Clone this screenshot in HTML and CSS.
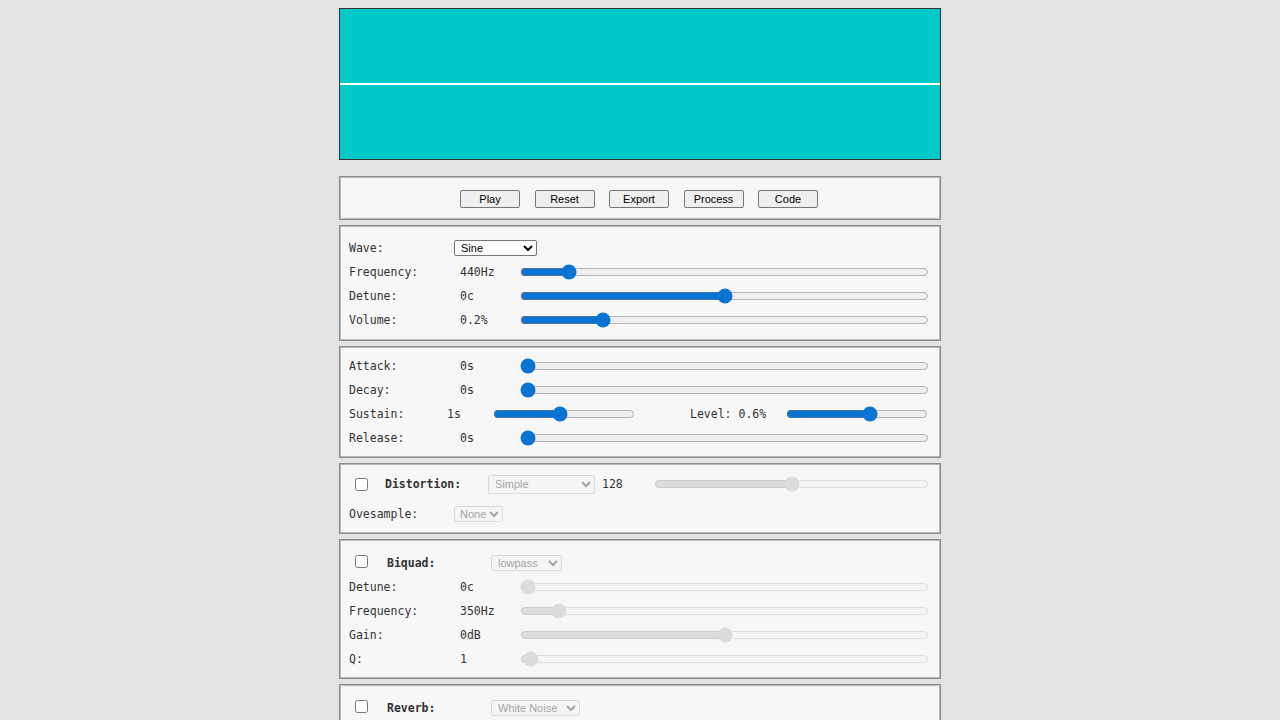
FILE: index.html
```html
<!DOCTYPE html>
<html lang="en">
	<head>
		<meta charset="UTF-8">
		<meta name="viewport" content="width=device-width, initial-scale=1.0">
		<title>Synth</title>
		<link rel="stylesheet" href="styles.css">
	</head>
	<body>
		<div class="synth">
			<div class="scope">
				<div class="scope-line"></div>
			</div>

			<div class="panel buttons">
				<button>Play</button>
				<button>Reset</button>
				<button>Export</button>
				<button>Process</button>
				<button>Code</button>
			</div>

			<div class="panel osc">
				<div class="row">
					<span class="label">Wave:</span>
					<span class="value">
						<select class="wave-select">
							<option>Sine</option>
							<option>Square</option>
							<option>Sawtooth</option>
							<option>Triangle</option>
						</select>
					</span>
				</div>
				<div class="row">
					<span class="label">Frequency:</span>
					<span class="value">440Hz</span>
					<input type="range" min="0" max="4000" value="420">
				</div>
				<div class="row">
					<span class="label">Detune:</span>
					<span class="value">0c</span>
					<input type="range" min="-1200" max="1200" value="0">
				</div>
				<div class="row">
					<span class="label">Volume:</span>
					<span class="value">0.2%</span>
					<input type="range" min="0" max="1" step="0.01" value="0.19">
				</div>
			</div>

			<div class="panel env">
				<div class="row">
					<span class="label">Attack:</span>
					<span class="value">0s</span>
					<input type="range" min="0" max="2" step="0.01" value="0">
				</div>
				<div class="row">
					<span class="label">Decay:</span>
					<span class="value">0s</span>
					<input type="range" min="0" max="2" step="0.01" value="0">
				</div>
				<div class="row">
					<span class="sustain-label">Sustain:</span>
					<span class="sustain-value">1s</span>
					<input class="short-range" type="range" min="0" max="100" value="47">
					<span class="level-label">Level: 0.6%</span>
					<input class="short-range" type="range" min="0" max="1" step="0.01" value="0.6">
				</div>
				<div class="row">
					<span class="label">Release:</span>
					<span class="value">0s</span>
					<input type="range" min="0" max="2" step="0.01" value="0">
				</div>
			</div>

			<div class="panel dist">
				<div class="head-row dist-head">
					<input type="checkbox">
					<span class="head-label dist-label">Distortion:</span>
					<select class="dist-select" disabled>
						<option>Simple</option>
					</select>
					<span class="dist-amount">128</span>
					<input type="range" min="0" max="256" value="128" disabled>
				</div>
				<div class="row">
					<span class="label">Ovesample:</span>
					<span class="value">
						<select class="over-select" disabled>
							<option>None</option>
						</select>
					</span>
				</div>
			</div>

			<div class="panel biquad">
				<div class="head-row">
					<input type="checkbox">
					<span class="head-label">Biquad:</span>
					<select class="biquad-select" disabled>
						<option>lowpass</option>
					</select>
				</div>
				<div class="row">
					<span class="label">Detune:</span>
					<span class="value">0c</span>
					<input type="range" min="0" max="100" value="0" disabled>
				</div>
				<div class="row">
					<span class="label">Frequency:</span>
					<span class="value">350Hz</span>
					<input type="range" min="0" max="100" value="8" disabled>
				</div>
				<div class="row">
					<span class="label">Gain:</span>
					<span class="value">0dB</span>
					<input type="range" min="-40" max="40" value="0" disabled>
				</div>
				<div class="row">
					<span class="label">Q:</span>
					<span class="value">1</span>
					<input type="range" min="0" max="100" value="0.8" step="0.1" disabled>
				</div>
			</div>

			<div class="panel reverb">
				<div class="head-row">
					<input type="checkbox">
					<span class="head-label">Reverb:</span>
					<select class="reverb-select" disabled>
						<option>White Noise</option>
					</select>
				</div>
			</div>
		</div>
	</body>
</html>
```

FILE: styles.css
```css
body {
	margin: 8px 0 0;
	background-color: #e3e3e3;
	font-family: "DejaVu Sans Mono", "Liberation Mono", monospace;
	font-size: 11.5px;
	color: #333;
}
.synth {
	width: 602px;
	margin: 0 auto;
}
.scope {
	height: 150px;
	border: 1px solid #333;
	background-color: #02c8c8;
}
.scope-line {
	height: 2px;
	margin-top: 74px;
	background-color: #fff;
}
.panel {
	background-color: #f7f7f7;
	border: 1px solid #8a8a8a;
	box-shadow: inset 0 0 0 1px #b8b8b8;
	margin-top: 5px;
	padding: 7px 11px 7px 9px;
}
.buttons {
	margin-top: 16px;
	padding: 13px 2px 11px 0;
	display: flex;
	justify-content: center;
	gap: 14.5px;
}
button {
	width: 60px;
	height: 18px;
	padding: 0;
	font-family: "Liberation Sans", Arial, sans-serif;
	font-size: 11px;
	color: #000;
	background-color: #efefef;
	border: 1px solid #767676;
	border-radius: 2px;
}
.osc {
	padding-top: 10px;
	padding-bottom: 8px;
}
.row {
	height: 24px;
	display: flex;
	align-items: center;
	white-space: nowrap;
}
.label {
	width: 111px;
	flex: none;
}
.value {
	width: 61px;
	flex: none;
}
input[type="range"] {
	flex: 1;
	min-width: 0;
	height: 16px;
	margin: 0 0 0 -1px;
	accent-color: #0a74d4;
}
input[type="range"]:disabled {
	opacity: 0.6;
}
select {
	font-family: "Liberation Sans", Arial, sans-serif;
	font-size: 11px;
	height: 16px;
	padding: 0 0 0 2px;
	margin: 0;
}
.wave-select {
	width: 83px;
	margin-left: -6px;
	color: #000;
	background-color: #fff;
	border: 1px solid #767676;
	border-radius: 2px;
}
.sustain-label {
	width: 98px;
	flex: none;
}
.sustain-value {
	width: 47px;
	flex: none;
}
input.short-range {
	flex: none;
	width: 142px;
}
.level-label {
	flex: none;
	width: 80px;
	margin-left: 55px;
	margin-right: 17px;
}
.head-row {
	display: flex;
	align-items: center;
	height: 28px;
	white-space: nowrap;
}
.dist-head {
	height: 26px;
	margin-bottom: 5px;
}
input[type="checkbox"] {
	width: 13px;
	height: 13px;
	margin: 0 0 0 6px;
}
.head-label {
	font-weight: bold;
	width: 104px;
	flex: none;
	margin-left: 19px;
	padding-top: 3px;
}
.dist-label {
	width: 103px;
	margin-left: 17px;
	padding-top: 0;
}
.dist-select {
	width: 107px;
	height: 19px;
}
.dist-amount {
	width: 53px;
	flex: none;
	margin-left: 7px;
}
.over-select {
	width: 49px;
	margin-left: -6px;
	padding-left: 1px;
}
.biquad-select {
	width: 71px;
	margin-top: 4px;
}
.reverb-select {
	width: 89px;
	margin-top: 4px;
}
```
